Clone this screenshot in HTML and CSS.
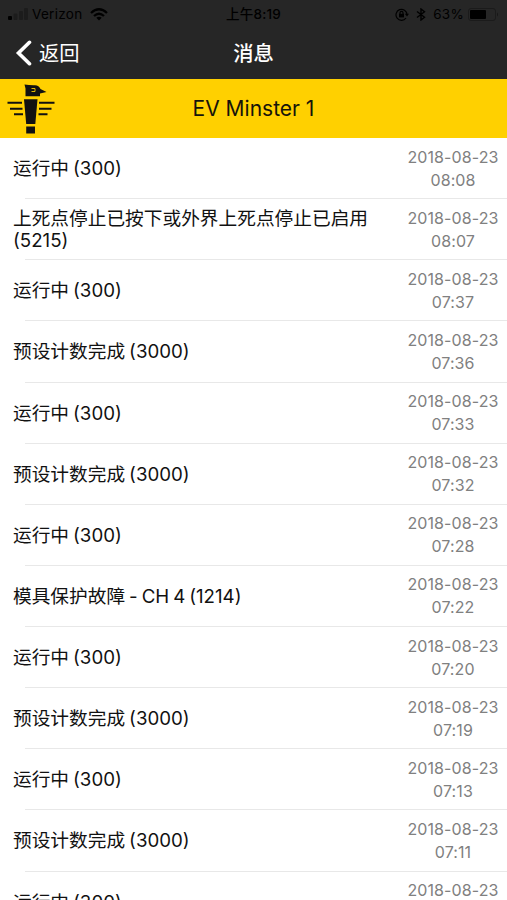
FILE: index.html
```html
<!DOCTYPE html>
<html lang="zh-CN">

<head>
    <meta charset="UTF-8" />
    <meta name="viewport" content="width=device-width, initial-scale=1.0" />
    <title>消息</title>
    <link rel="stylesheet" href="styles.css">
</head>

<body>
    <div class="app">
        <header>
            <div class="status-bar">
                <div class="status-left">
                    <svg class="signal" width="21" height="12" viewBox="0 0 21 12">
                        <rect x="0" y="8" width="4" height="4" rx="1" fill="#000" />
                        <rect x="5.5" y="5.5" width="4" height="6.5" rx="1" fill="#1c1c1c" />
                        <rect x="11" y="3" width="4" height="9" rx="1" fill="#1c1c1c" />
                        <rect x="16" y="0" width="4" height="12" rx="1" fill="#1c1c1c" />
                    </svg>
                    <span class="carrier">Verizon</span>
                    <svg class="wifi" width="18" height="13" viewBox="0 0 18 13" fill="none" stroke="#000" stroke-width="2.3">
                        <path d="M1 5Q9-2.400 17 5" />
                        <path d="M4 8Q9 3.400 14 8" />
                        <path d="M9 12.500L6.300 9.700Q9 7.600 11.700 9.700Z" fill="#000" stroke="none" />
                    </svg>
                </div>
                <div class="clock">上午8:19</div>
                <div class="status-right">
                    <svg width="14" height="13" viewBox="0 0 14 13" fill="none" stroke="#000" stroke-width="1.2">
                        <path d="M11 10A5.500 5.500 0 1 1 12 6.500" />
                        <path d="M9.800 5.800H14L12 8.600Z" fill="#000" stroke="none" />
                        <rect x="4" y="5.800" width="5" height="3.600" fill="#000" stroke="none" />
                        <path d="M5 6V4.800a1.500 1.500 0 0 1 3 0V6" />
                    </svg>
                    <svg class="bluetooth" width="10" height="13" viewBox="0 0 10 13" fill="none" stroke="#000" stroke-width="1.4">
                        <path d="M1 3.500L8.500 9.300L5 12V1L8.500 3.700L1 9.500" />
                    </svg>
                    <span class="percent">63%</span>
                    <svg class="battery" width="31" height="13" viewBox="0 0 31 13">
                        <rect x=".5" y=".5" width="27" height="12" rx="2.500" fill="none" stroke="#1b1b1b" />
                        <rect x="2" y="2" width="16" height="9" rx="1" fill="#000" />
                        <path d="M29 4.500q2 2 0 4z" fill="#171717" />
                    </svg>
                </div>
            </div>
            <nav class="nav-bar">
                <a class="back" href="#">
                    <svg width="17" height="26" viewBox="0 0 17 26" fill="none" stroke="#fff" stroke-width="3.6" stroke-linecap="round">
                        <path d="M14.500 2.300L3.500 13L14.500 23.700" />
                    </svg>
                    <span>返回</span>
                </a>
                <h1>消息</h1>
            </nav>
        </header>

        <div class="machine">
            <svg class="logo" width="50" height="50" viewBox="0 0 50 50">
                <path d="M18.500 0.500Q24 1.500 29 1.300Q33 1.500 34.500 5L40.500 8L34 9.500V12.300H19.500V4.500Z" />
                <path d="M18 15.200H31.500L29.300 40H20.200Z" />
                <path d="M20.200 42.500H29V49.500H20.200Z" />
                <path d="M1.500 18.800H16M4 24.800H16.500M8 30.200H17M33 18.800H48.500M33 24.800H45.500M32.500 30.200H41.500" stroke="#111" stroke-width="2" />
                <path d="M25.500 4.500H29V7.500H25.500" fill="none" stroke="#e0b700" stroke-width="1" />
            </svg>
            <h2>EV Minster 1</h2>
        </div>

        <ul id="messages" class="messages"></ul>
    </div>

    <script>
        const RUNNING = "运行中 (300)";
        const PRESET_DONE = "预设计数完成 (3000)";

        const messages = [
            { text: RUNNING, date: "2018-08-23", time: "08:08" },
            { text: "上死点停止已按下或外界上死点停止已启用 (5215)", date: "2018-08-23", time: "08:07" },
            { text: RUNNING, date: "2018-08-23", time: "07:37" },
            { text: PRESET_DONE, date: "2018-08-23", time: "07:36" },
            { text: RUNNING, date: "2018-08-23", time: "07:33" },
            { text: PRESET_DONE, date: "2018-08-23", time: "07:32" },
            { text: RUNNING, date: "2018-08-23", time: "07:28" },
            { text: "模具保护故障 - CH 4 (1214)", date: "2018-08-23", time: "07:22" },
            { text: RUNNING, date: "2018-08-23", time: "07:20" },
            { text: PRESET_DONE, date: "2018-08-23", time: "07:19" },
            { text: RUNNING, date: "2018-08-23", time: "07:13" },
            { text: PRESET_DONE, date: "2018-08-23", time: "07:11" },
            { text: RUNNING, date: "2018-08-23", time: "" }
        ];

        const list = document.getElementById("messages");

        messages.forEach(message => {
            const row = document.createElement("li");
            row.className = "message";
            row.innerHTML = `
          <p class="text">${message.text}</p>
          <div class="stamp">
            <div>${message.date}</div>
            <div>${message.time || "&nbsp;"}</div>
          </div>
        `;
            list.appendChild(row);
        });
    </script>
</body>

</html>
```

FILE: styles.css
```css
html,
body {
    height: 100%;
    margin: 0;
    font-family: 'Inter', 'Noto Sans CJK SC', sans-serif;
}

.app {
    display: flex;
    flex-direction: column;
    height: 100vh;
    overflow: hidden;
    background: #fff;
}

header {
    flex: none;
    height: 79px;
    background: #262626;
}

.status-bar {
    display: grid;
    grid-template-columns: 1fr auto 1fr;
    align-items: center;
    height: 27px;
    padding: 0 8px;
    font-size: 13.5px;
    line-height: 27px;
    color: #000;
}

.status-left,
.status-right {
    display: flex;
    align-items: center;
}

.status-right {
    justify-content: flex-end;
}

.carrier {
    margin-left: 3px;
    letter-spacing: 0.3px;
}

.wifi {
    margin-left: 7px;
}

.clock {
    padding-top: 1px;
    font-weight: 500;
    letter-spacing: 0.2px;
}

.bluetooth {
    margin: 0 7px;
}

.percent {
    letter-spacing: 0.3px;
}

.battery {
    margin-left: 4px;
}

.nav-bar {
    display: grid;
    grid-template-columns: 1fr auto 1fr;
    align-items: center;
    height: 50px;
    padding: 1px 15px 0;
    color: #fff;
}

.back {
    display: flex;
    align-items: center;
    gap: 7px;
    font-size: 20.3px;
    line-height: 28px;
    color: #fff;
    text-decoration: none;
}

.back span {
    padding-top: 1px;
}

.nav-bar h1 {
    margin: 0;
    padding-top: 1px;
    font-size: 20.3px;
    line-height: 28px;
    font-weight: 500;
}

.machine {
    flex: none;
    display: grid;
    grid-template-columns: 1fr auto 1fr;
    align-items: center;
    height: 59px;
    padding: 0 6px;
    box-sizing: border-box;
    background: #ffd000;
}

.machine h2 {
    margin: 0;
    font-size: 21px;
    line-height: 28px;
    font-weight: 400;
    color: #16140a;
}

.logo {
    fill: #111;
}

.messages {
    flex: 1;
    min-height: 0;
    margin: 0;
    padding: 0;
    overflow: hidden;
    list-style: none;
}

.message {
    display: flex;
    align-items: center;
    justify-content: space-between;
    box-sizing: border-box;
    height: 61.13px;
    padding: 0 8px 0 13px;
    background: linear-gradient(#e8e8e8, #e8e8e8) 25px 100% / 100% 1px no-repeat;
}

.text {
    width: 366px;
    margin: 0;
    padding-top: 1px;
    font-size: 18.7px;
    line-height: 22px;
    word-spacing: -1.3px;
    color: #111;
}

.stamp {
    flex: none;
    width: 92px;
    font-size: 16px;
    line-height: 23px;
    letter-spacing: 0.1px;
    text-align: center;
    color: #808080;
}
```
